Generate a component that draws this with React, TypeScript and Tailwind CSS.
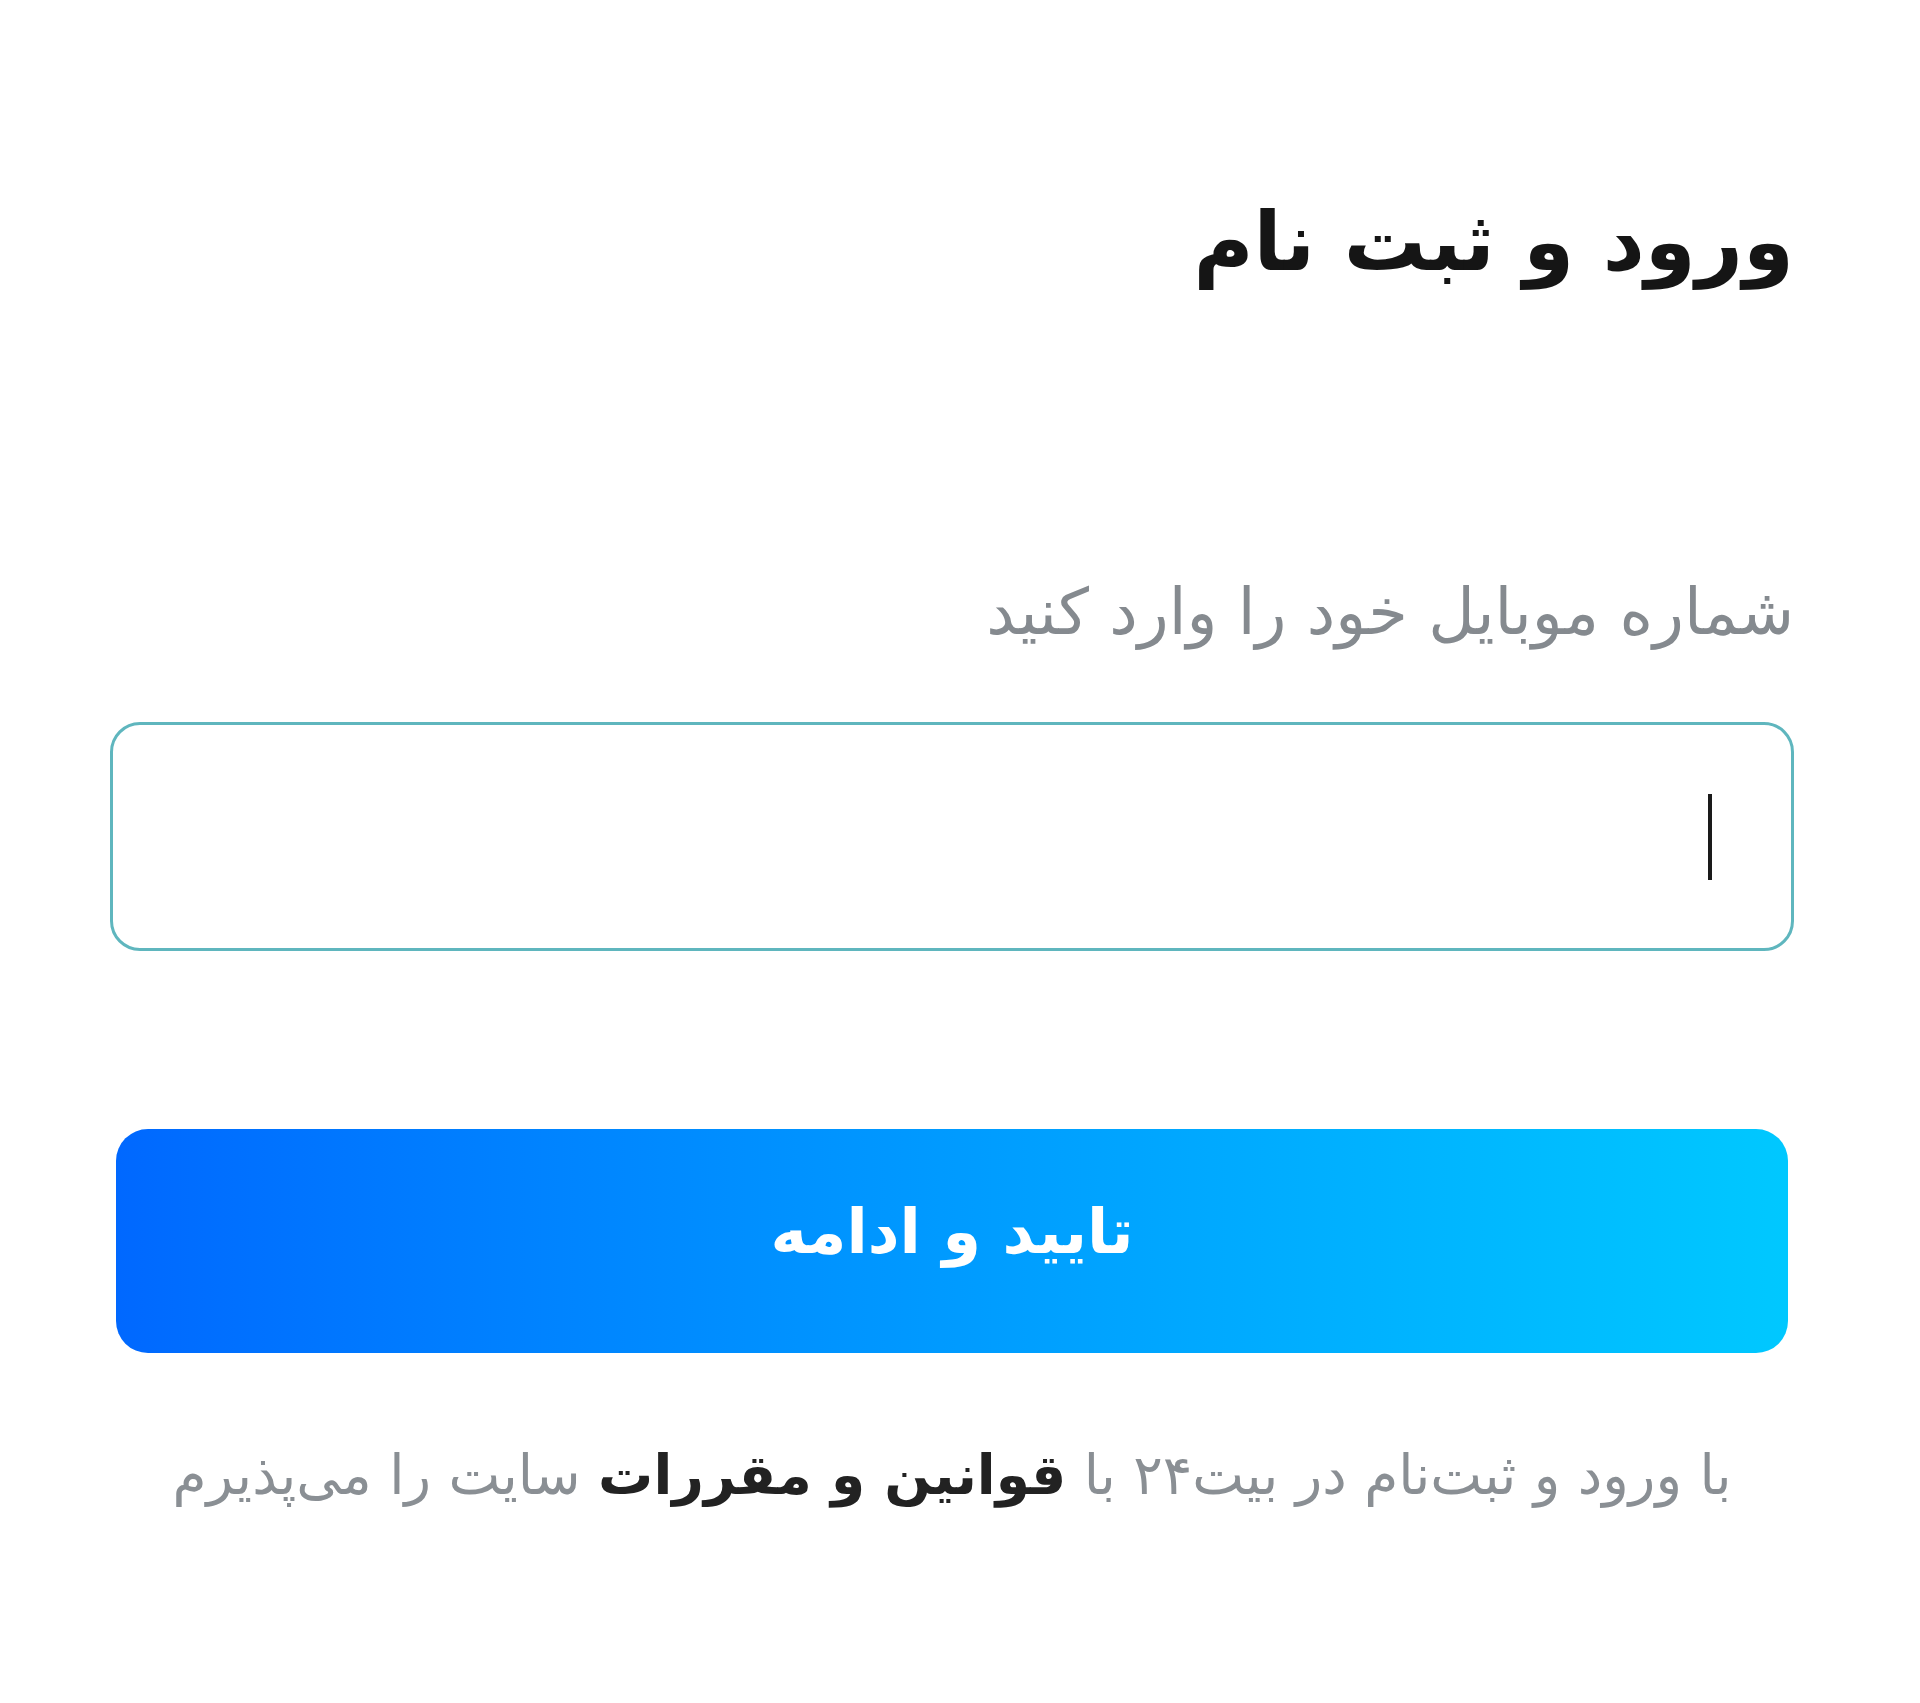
import React from "react";

export default function App() {
  return (
    <div
      dir="rtl"
      className="w-full h-[1703px] bg-white"
      style={{ fontFamily: '"DejaVu Sans", "Noto Sans", sans-serif' }}
    >
      <div className="pl-[110px] pr-[126px] pt-[192px] flex flex-col">
        <div className="h-[100px] flex items-center">
          <h1 className="text-[82px] font-bold text-[#151515] leading-none">ورود و ثبت نام</h1>
        </div>
        <div className="mt-[290px] h-[60px] flex items-center">
          <p className="text-[64px] text-[#858a8f] leading-none whitespace-nowrap">شماره موبایل خود را وارد کنید</p>
        </div>
        <div className="mt-[80px] h-[229px] rounded-[30px] border-[3px] border-[#5fb6be] bg-white flex items-center pr-[79px]">
          <span className="block w-[4px] h-[86px] bg-[#1a1a1a]" />
        </div>
        <button className="mt-[178px] mx-[6px] h-[224px] rounded-[32px] bg-linear-to-l from-[#00c8ff] to-[#0068ff] flex items-center justify-center pb-[18px]">
          <span className="text-[62px] font-bold text-white leading-none">تایید و ادامه</span>
        </button>
        <div className="mt-[92px] h-[60px] flex items-center justify-center">
          <p className="text-[55px] text-[#8a8f94] leading-none whitespace-nowrap">
            با ورود و ثبت‌نام در بیت۲۴ با <span className="font-bold text-[#222]">قوانین و مقررات</span> سایت را می‌پذیرم
          </p>
        </div>
      </div>
    </div>
  );
}
